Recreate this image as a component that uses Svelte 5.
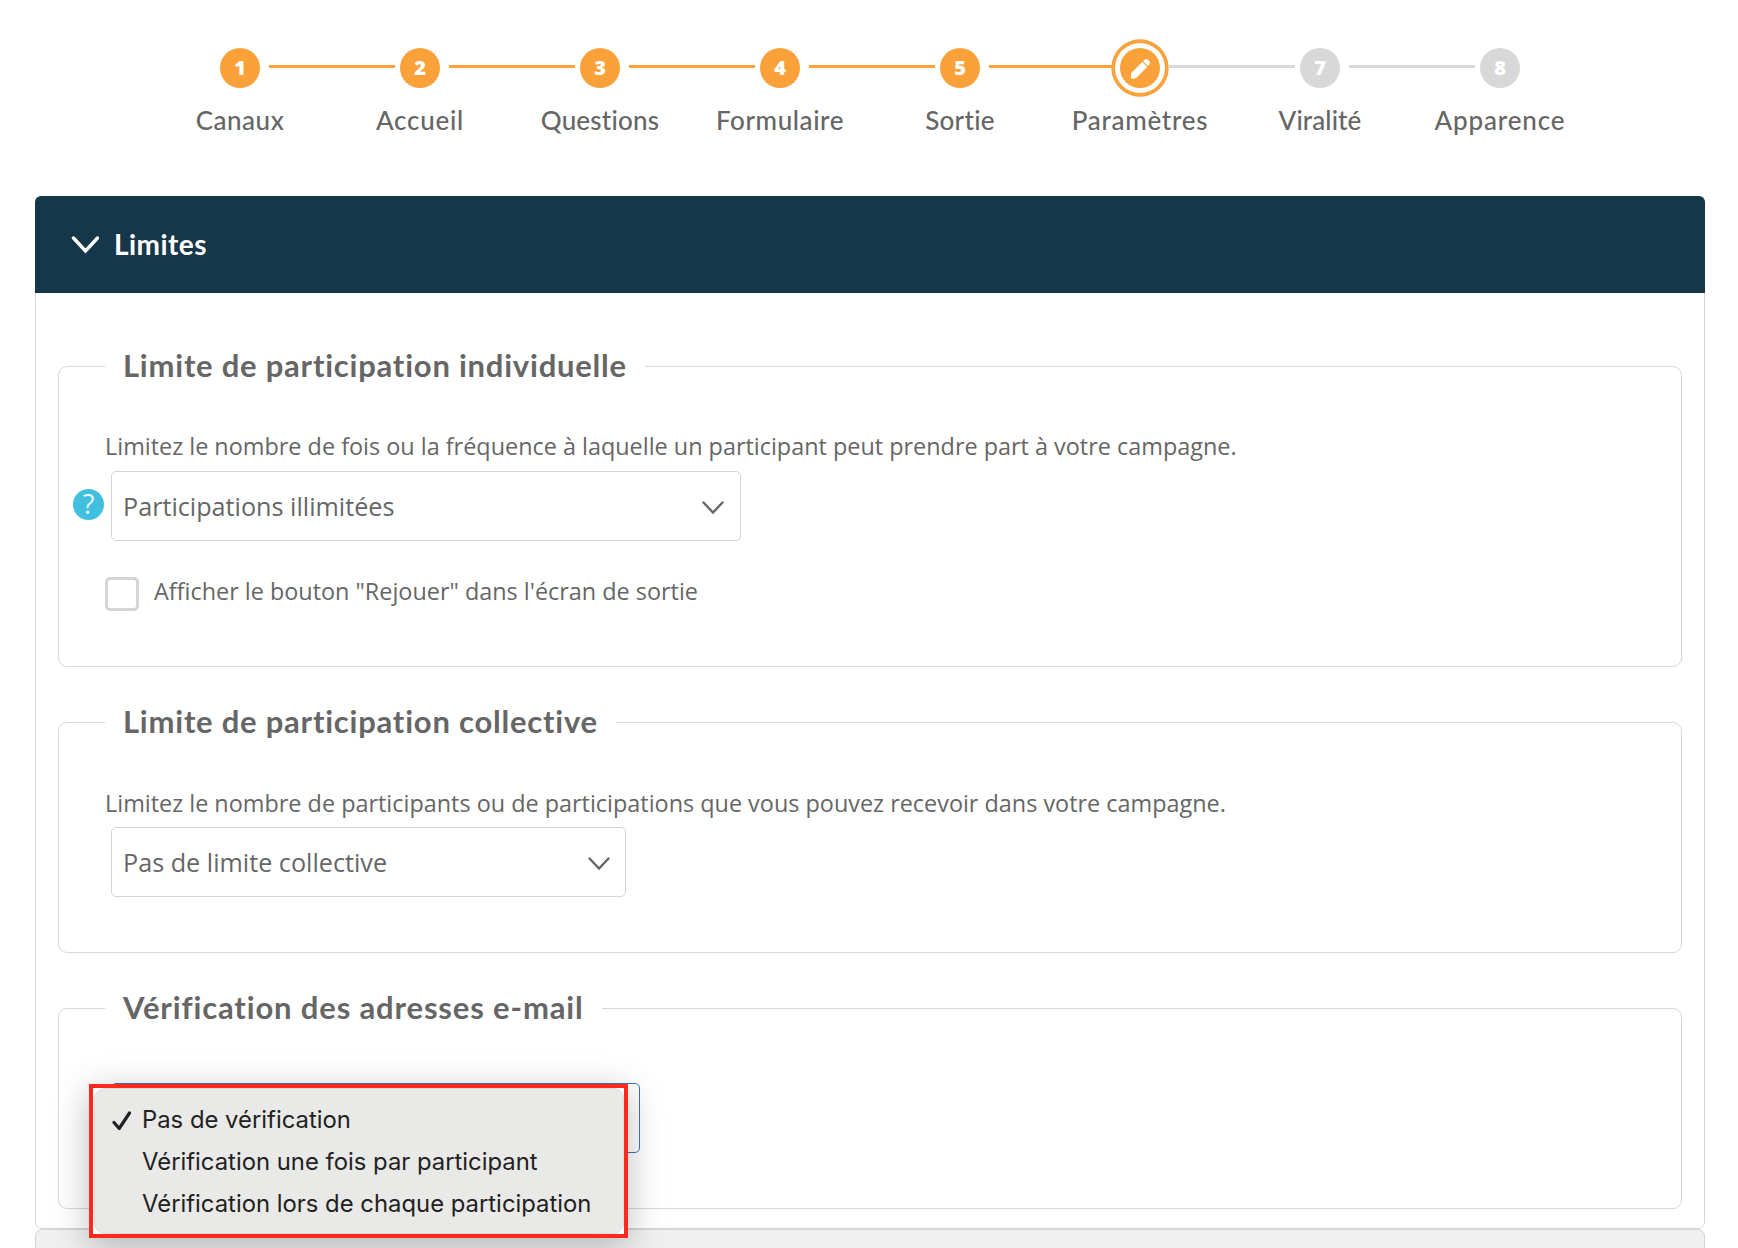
<script>
    let steps = [
        { label: 'Canaux', spacing: 0.5 },
        { label: 'Accueil', spacing: 0.75 },
        { label: 'Questions', spacing: 0.2 },
        { label: 'Formulaire', spacing: 0.6 },
        { label: 'Sortie', spacing: 0.3 },
        { label: 'Paramètres', spacing: 0.7 },
        { label: 'Viralité', spacing: 0.1 },
        { label: 'Apparence', spacing: 0.85 }
    ];
    let current = 5;

    let options = [
        'Pas de vérification',
        'Vérification une fois par participant',
        'Vérification lors de chaque participation'
    ];
    let selected = 0;
    let menuOpen = true;
    let replay = false;

    const choose = (i) => {
        selected = i;
        menuOpen = false;
    }
</script>

<div class="page">
    <nav class="steps">
        {#each steps as step, i}
            <div class="step" class:todo={i > current} class:active={i === current}>
                <div class="track">
                    <div class="bullet">
                        {#if i === current}
                            <svg width="21" height="21" viewBox="0 0 22 22">
                                <path d="M1 21.500v-5.500L13 4.300l5 5L6.500 21q-2 .800-5.500.500z" fill="#fff" />
                                <path d="M13.800 3.500l1.800-1.800q1.700-1.300 3.200.2l1.400 1.400q1.500 1.700.2 3.200l-1.600 2z" fill="#fff" />
                            </svg>
                        {:else}
                            <span>{i + 1}</span>
                        {/if}
                    </div>
                    {#if i < steps.length - 1}
                        <div class="line" class:grey={i >= current}></div>
                    {/if}
                </div>
                <div class="label" style="letter-spacing: {step.spacing}px">{step.label}</div>
            </div>
        {/each}
    </nav>

    <section class="panel">
        <header>
            <svg width="28" height="20" viewBox="0 0 28 20">
                <path d="M2.500 3l12 13 12-13" fill="none" stroke="#fff" stroke-width="3.400" stroke-linecap="round" />
            </svg>
            <h2>Limites</h2>
        </header>

        <div class="body">
            <fieldset class="individual">
                <legend>Limite de participation individuelle</legend>
                <p>Limitez le nombre de fois ou la fréquence à laquelle un participant peut prendre part à votre campagne.</p>
                <div class="field">
                    <span class="help">?</span>
                    <div class="select wide">
                        <span>Participations illimitées</span>
                        <svg width="22" height="14" viewBox="0 0 22 14">
                            <path d="M1.500 1.500l9.500 10 9.500-10" fill="none" stroke="#666" stroke-width="2.400" stroke-linecap="round" />
                        </svg>
                    </div>
                </div>
                <label class="check">
                    <input type="checkbox" bind:checked={replay} />
                    <span>Afficher le bouton "Rejouer" dans l'écran de sortie</span>
                </label>
            </fieldset>

            <fieldset class="collective">
                <legend>Limite de participation collective</legend>
                <p>Limitez le nombre de participants ou de participations que vous pouvez recevoir dans votre campagne.</p>
                <div class="field">
                    <div class="select">
                        <span>Pas de limite collective</span>
                        <svg width="22" height="14" viewBox="0 0 22 14">
                            <path d="M1.500 1.500l9.500 10 9.500-10" fill="none" stroke="#666" stroke-width="2.400" stroke-linecap="round" />
                        </svg>
                    </div>
                </div>
            </fieldset>

            <fieldset class="email">
                <legend>Vérification des adresses e-mail</legend>
                <div class="field">
                    <div class="select focus">
                        {#if menuOpen}
                            <div class="highlight">
                                <div class="menu">
                                    {#each options as option, i}
                                        <button on:click={() => choose(i)}>
                                            <span class="tick">
                                                {#if i === selected}
                                                    <svg width="20" height="20" viewBox="0 0 20 20">
                                                        <path d="M2 11.500l5.200 6L17.500 2" fill="none" stroke="#222" stroke-width="3.200" stroke-linecap="round" stroke-linejoin="round" />
                                                    </svg>
                                                {/if}
                                            </span>
                                            {option}
                                        </button>
                                    {/each}
                                </div>
                            </div>
                        {:else}
                            <span>{options[selected]}</span>
                        {/if}
                    </div>
                </div>
            </fieldset>
        </div>
    </section>
    <section class="panel next"></section>
</div>

<style>
    :global(body) {
        background: #fff;
    }

    .page {
        height: 1248px;
        overflow: hidden;
        box-sizing: border-box;
        padding: 39px 33px 0 35px;
        font-family: "Open Sans", "Noto Sans", sans-serif;
        color: #666;
    }

    .steps {
        display: flex;
        height: 157px;
        padding-left: 115px;
    }

    .step {
        width: 180px;
    }

    .track {
        display: flex;
        height: 58px;
        align-items: center;
        padding-left: 70px;
    }

    .bullet {
        display: flex;
        flex: none;
        width: 40px;
        height: 40px;
        align-items: center;
        justify-content: center;
        border-radius: 50%;
        background: #fba139;
        color: #fff;
        font-size: 20px;
        font-weight: 800;
    }

    .bullet span {
        margin-top: -2px;
    }

    .todo .bullet {
        background: #d8d8d8;
    }

    .active .bullet {
        box-shadow: 0 0 0 5px #fff, 0 0 0 8.700px #fba139;
        z-index: 1;
    }

    .line {
        flex: none;
        width: 126px;
        height: 3px;
        margin: 0 0 3px 9px;
        background: #fba139;
    }

    .line.grey {
        background: #d8d8d8;
    }

    .label {
        margin-top: 6px;
        line-height: 34px;
        text-align: center;
        font-family: Lato, sans-serif;
        font-size: 26px;
        font-weight: 500;
        white-space: nowrap;
    }

    .panel {
        box-sizing: border-box;
        width: 1670px;
        height: 1033px;
        border: 1px solid #d5d5d5;
        border-radius: 7px;
    }

    .panel.next {
        background: #f0f0f0;
        height: 97px;
    }

    header {
        display: flex;
        height: 97px;
        margin: -1px -1px 0;
        align-items: center;
        padding-left: 36px;
        gap: 15px;
        border-radius: 6px 6px 0 0;
        background: #16374a;
        color: #fff;
    }

    h2 {
        margin: -2px 0 0;
        font-family: Lato, sans-serif;
        font-size: 28px;
        font-weight: 700;
        letter-spacing: .45px;
    }

    .body {
        padding: 55px 22px 0;
    }

    fieldset {
        box-sizing: border-box;
        margin: 0;
        padding: 0 46px;
        border: 1px solid #d8d8d8;
        border-radius: 9px;
    }

    .individual {
        height: 319px;
        margin-bottom: 37px;
    }

    .collective {
        height: 249px;
        margin-bottom: 37px;
    }

    .email {
        height: 219px;
    }

    legend {
        height: 36px;
        padding: 0 18px;
        line-height: 34px;
        font-family: Lato, sans-serif;
        font-size: 31px;
        font-weight: 700;
        letter-spacing: .77px;
        white-space: nowrap;
    }

    .email legend {
        letter-spacing: .85px;
    }

    p {
        margin: 47px 0 0;
        line-height: 32px;
        font-size: 23.420px;
        white-space: nowrap;
    }

    .individual p {
        margin-top: 46px;
        padding-bottom: 1px;
    }

    .field {
        display: flex;
        align-items: center;
        margin: 8px 0 0 6px;
    }

    .email .field {
        margin-top: 57px;
    }

    .help {
        width: 31px;
        height: 31px;
        margin: 0 7px 4px -38px;
        border-radius: 50%;
        background: #40c0de;
        color: #e4f7fb;
        line-height: 30px;
        text-align: center;
        font-size: 27px;
        font-weight: 500;
    }

    .select {
        position: relative;
        display: flex;
        box-sizing: border-box;
        width: 515px;
        height: 70px;
        align-items: center;
        justify-content: space-between;
        padding: 0 15px 0 11px;
        border: 1px solid #d5d5d5;
        border-radius: 5px;
        font-size: 25.200px;
    }

    .select svg {
        margin-top: 4px;
    }

    .select.wide {
        width: 630px;
        padding-right: 16px;
    }

    .select.focus {
        width: 529px;
        border-color: #3577bb;
    }

    .check {
        display: flex;
        align-items: center;
        gap: 15px;
        margin-top: 36px;
        font-size: 23.420px;
        line-height: 34px;
    }

    .check input {
        appearance: none;
        width: 34px;
        height: 34px;
        margin: 0;
        border: 3px solid #d5d5d5;
        border-radius: 5px;
    }

    .check span {
        margin-top: -6px;
    }

    .highlight {
        position: absolute;
        top: 0;
        left: -23px;
        z-index: 2;
        box-sizing: border-box;
        width: 539px;
        height: 154px;
        border: 4px solid #fc2a1c;
        background: #fff;
        box-shadow: 0 8px 34px rgba(0, 0, 0, .26);
    }

    .menu {
        box-sizing: border-box;
        height: 146px;
        margin-left: 1px;
        padding: 9px 0;
        border: 1px solid #dadad8;
        border-radius: 11px;
        background: #e9e9e7;
    }

    .menu button {
        display: flex;
        width: 100%;
        height: 42px;
        align-items: center;
        padding: 0 0 0 18px;
        border: 0;
        background: unset;
        color: #222;
        font-family: Inter, sans-serif;
        font-size: 23.850px;
        white-space: nowrap;
    }

    .menu svg {
        display: block;
        margin: 2px 0 0 -1px;
    }

    .tick {
        flex: none;
        width: 29px;
        height: 20px;
        text-align: left;
    }
</style>
